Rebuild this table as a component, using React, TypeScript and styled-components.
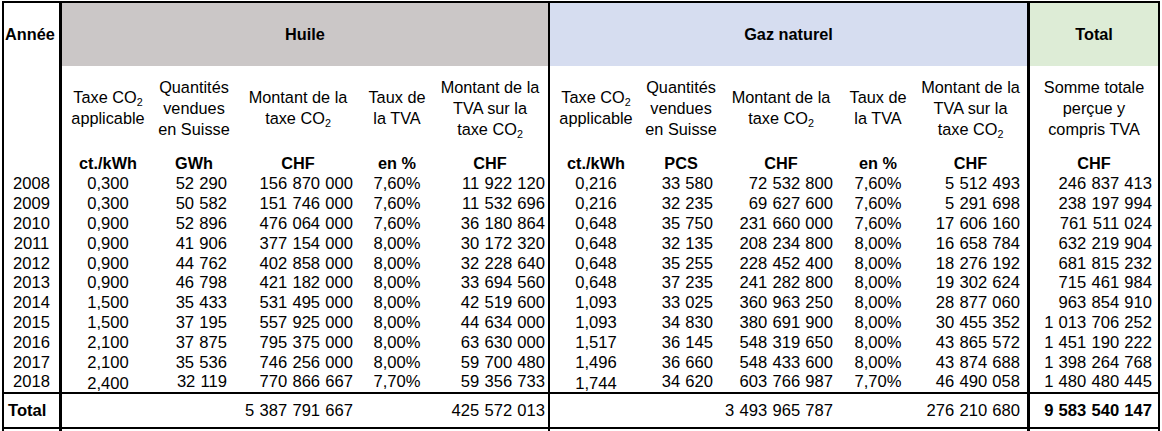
import * as React from "react"
import styled, { createGlobalStyle, css } from "styled-components"

const GlobalStyle = createGlobalStyle`
  html, body {
    margin: 0;
    padding: 0;
    background: #ffffff;
  }
  body {
    font-family: "Liberation Sans", Arial, sans-serif;
    color: #000000;
  }
`

type Align = "left" | "center" | "right"
type Edge = "none" | "thin" | "thick"

interface ColSpec {
  w: number
  align: Align
  pad?: number
  edge?: Edge
}

const cols: ColSpec[] = [
  { w: 58, align: "center", edge: "thick" },
  { w: 92, align: "center" },
  { w: 80, align: "right", pad: 7 },
  { w: 128, align: "right", pad: 9 },
  { w: 70, align: "center" },
  { w: 118, align: "right", pad: 3, edge: "thin" },
  { w: 92, align: "center" },
  { w: 78, align: "right", pad: 7 },
  { w: 122, align: "right", pad: 9 },
  { w: 72, align: "center" },
  { w: 116, align: "right", pad: 7, edge: "thick" },
  { w: 128, align: "right", pad: 6 },
]

const rows: string[][] = [
  ["2008", "0,300", "52 290", "156 870 000", "7,60%", "11 922 120", "0,216", "33 580", "72 532 800", "7,60%", "5 512 493", "246 837 413"],
  ["2009", "0,300", "50 582", "151 746 000", "7,60%", "11 532 696", "0,216", "32 235", "69 627 600", "7,60%", "5 291 698", "238 197 994"],
  ["2010", "0,900", "52 896", "476 064 000", "7,60%", "36 180 864", "0,648", "35 750", "231 660 000", "7,60%", "17 606 160", "761 511 024"],
  ["2011", "0,900", "41 906", "377 154 000", "8,00%", "30 172 320", "0,648", "32 135", "208 234 800", "8,00%", "16 658 784", "632 219 904"],
  ["2012", "0,900", "44 762", "402 858 000", "8,00%", "32 228 640", "0,648", "35 255", "228 452 400", "8,00%", "18 276 192", "681 815 232"],
  ["2013", "0,900", "46 798", "421 182 000", "8,00%", "33 694 560", "0,648", "37 235", "241 282 800", "8,00%", "19 302 624", "715 461 984"],
  ["2014", "1,500", "35 433", "531 495 000", "8,00%", "42 519 600", "1,093", "33 025", "360 963 250", "8,00%", "28 877 060", "963 854 910"],
  ["2015", "1,500", "37 195", "557 925 000", "8,00%", "44 634 000", "1,093", "34 830", "380 691 900", "8,00%", "30 455 352", "1 013 706 252"],
  ["2016", "2,100", "37 875", "795 375 000", "8,00%", "63 630 000", "1,517", "36 145", "548 319 650", "8,00%", "43 865 572", "1 451 190 222"],
  ["2017", "2,100", "35 536", "746 256 000", "8,00%", "59 700 480", "1,496", "36 660", "548 433 600", "8,00%", "43 874 688", "1 398 264 768"],
  ["2018", "2,400", "32 119", "770 866 667", "7,70%", "59 356 733", "1,744", "34 620", "603 766 987", "7,70%", "46 490 058", "1 480 480 445"],
]

const totals: string[] = ["Total", "", "", "5 387 791 667", "", "425 572 013", "", "", "3 493 965 787", "", "276 210 680", "9 583 540 147"]

const units = ["", "ct./kWh", "GWh", "CHF", "en %", "CHF", "ct./kWh", "PCS", "CHF", "en %", "CHF", "CHF"]

const Page = styled.div`
  padding: 1px 0 0 2px;
`

const Table = styled.table`
  border-collapse: separate;
  border-spacing: 0;
  table-layout: fixed;
  width: 1158px;
  border-top: 2.5px solid #000;
  border-left: 2px solid #000;
  border-right: 2px solid #000;
  font-size: 16.3px;
  line-height: 19px;
`

const edgeCss = (edge?: Edge) =>
  edge === "thick"
    ? css`border-right: 3px solid #000;`
    : edge === "thin"
      ? css`border-right: 2px solid #000;`
      : css``

const Cell = styled.td<{ $align: Align; $pad?: number; $edge?: Edge; $bold?: boolean }>`
  padding: 0 ${(p) => (p.$align === "right" ? p.$pad ?? 0 : 0)}px 0
    ${(p) => (p.$align === "left" ? p.$pad ?? 0 : 0)}px;
  text-align: ${(p) => p.$align};
  white-space: nowrap;
  overflow: visible;
  font-size: 16.6px;
  word-spacing: 0.6px;
  font-weight: ${(p) => (p.$bold ? 700 : 400)};
  ${(p) => edgeCss(p.$edge)}
`

const GroupRow = styled.tr`
  height: 63px;
`

const GroupCell = styled.th<{ $bg: string; $edge?: Edge; $align?: Align }>`
  background: ${(p) => p.$bg};
  font-weight: 700;
  text-align: ${(p) => p.$align ?? "center"};
  padding: 0 0 0 ${(p) => (p.$align === "left" ? 1 : 0)}px;
  vertical-align: middle;
  ${(p) => edgeCss(p.$edge)}
`

const LabelRow = styled.tr`
  height: 84px;
`

const LabelCell = styled.td<{ $edge?: Edge }>`
  text-align: center;
  vertical-align: middle;
  line-height: 21px;
  padding: 0;
  white-space: nowrap;
  ${(p) => edgeCss(p.$edge)}
`

const UnitRow = styled.tr`
  height: 24px;
`

const UnitCell = styled.td<{ $edge?: Edge }>`
  text-align: center;
  vertical-align: bottom;
  font-weight: 700;
  padding: 0 0 1px;
  ${(p) => edgeCss(p.$edge)}
`

const DataRow = styled.tr`
  height: 19.8px;

  td {
    vertical-align: middle;
  }
`

const LowText = styled.span`
  display: inline-block;
  transform: translateY(2px);
`

const TotalRow = styled.tr`
  height: 37px;

  td {
    border-top: 2px solid #000;
    border-bottom: 2px solid #000;
    vertical-align: middle;
  }
`

const TailRow = styled.tr`
  height: 3px;

  td {
    padding: 0;
    line-height: 0;
    font-size: 0;
  }
`

const Sub = styled.sub`
  font-size: 0.66em;
  vertical-align: -0.28em;
  line-height: 0;
`

const Co2 = () => (
  <>
    CO<Sub>2</Sub>
  </>
)

const labels: React.ReactNode[] = [
  null,
  <>Taxe <Co2 /><br />applicable</>,
  <>Quantités<br />vendues<br />en Suisse</>,
  <>Montant de la<br />taxe <Co2 /></>,
  <>Taux de<br />la TVA</>,
  <>Montant de la<br />TVA sur la<br />taxe <Co2 /></>,
  <>Taxe <Co2 /><br />applicable</>,
  <>Quantités<br />vendues<br />en Suisse</>,
  <>Montant de la<br />taxe <Co2 /></>,
  <>Taux de<br />la TVA</>,
  <>Montant de la<br />TVA sur la<br />taxe <Co2 /></>,
  <>Somme totale<br />perçue y<br />compris TVA</>,
]

const HUILE = "#cbc7c7"
const GAZ = "#d6ddf0"
const TOTAL = "#ddecd6"

export default function App() {
  return (
    <Page>
      <GlobalStyle />
      <Table>
        <colgroup>
          {cols.map((c, i) => (
            <col key={i} style={{ width: c.w }} />
          ))}
        </colgroup>
        <thead>
          <GroupRow>
            <GroupCell $bg="#ffffff" $align="left" $edge="thick">
              Année
            </GroupCell>
            <GroupCell $bg={HUILE} colSpan={5} $edge="thin">
              Huile
            </GroupCell>
            <GroupCell $bg={GAZ} colSpan={5} $edge="thick">
              Gaz naturel
            </GroupCell>
            <GroupCell $bg={TOTAL}>Total</GroupCell>
          </GroupRow>
          <LabelRow>
            {labels.map((l, i) => (
              <LabelCell key={i} $edge={cols[i].edge}>
                {l}
              </LabelCell>
            ))}
          </LabelRow>
          <UnitRow>
            {units.map((u, i) => (
              <UnitCell key={i} $edge={cols[i].edge}>
                {u}
              </UnitCell>
            ))}
          </UnitRow>
        </thead>
        <tbody>
          {rows.map((r, ri) => (
            <DataRow key={r[0]}>
              {r.map((v, i) => {
                const c = cols[i]
                const low = ri === rows.length - 1 && (i === 1 || i === 6)
                return (
                  <Cell key={i} $align={c.align} $pad={c.pad} $edge={c.edge}>
                    {low ? <LowText>{v}</LowText> : v}
                  </Cell>
                )
              })}
            </DataRow>
          ))}
          <TotalRow>
            {totals.map((v, i) => {
              const c = cols[i]
              const first = i === 0
              return (
                <Cell
                  key={i}
                  $align={first ? "left" : c.align}
                  $pad={first ? 4 : c.pad}
                  $edge={c.edge}
                  $bold={first || i === 11}
                >
                  {v}
                </Cell>
              )
            })}
          </TotalRow>
          <TailRow>
            {cols.map((c, i) => (
              <Cell key={i} $align="center" $edge={c.edge} />
            ))}
          </TailRow>
        </tbody>
      </Table>
    </Page>
  )
}
